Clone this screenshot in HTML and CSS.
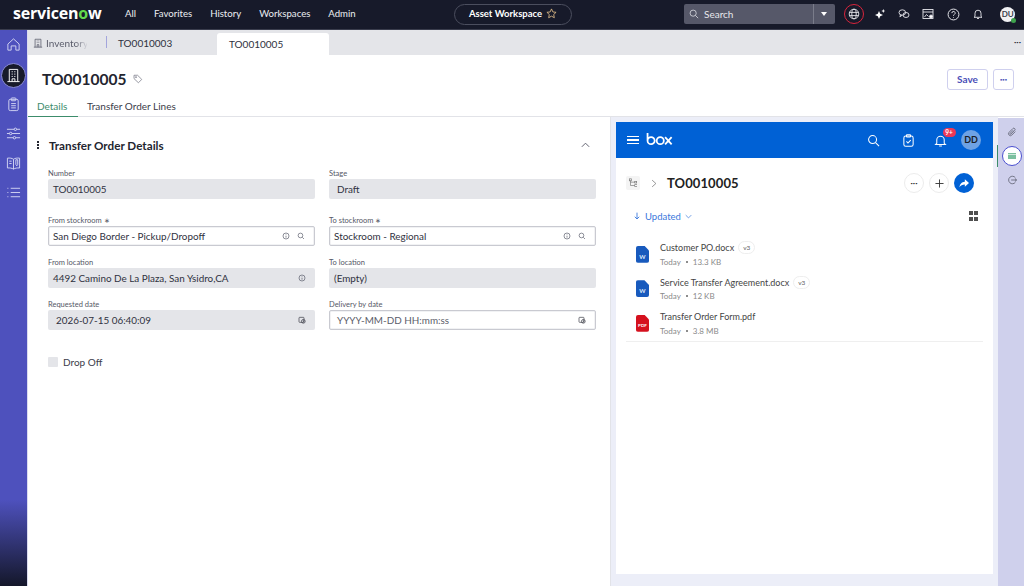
FILE: index.html
```html
<!DOCTYPE html>
<html lang="en">
<head>
    <meta charset="UTF-8">
    <meta name="viewport" content="width=device-width, initial-scale=1.0">
    <title>TO0010005</title>
    <link rel="stylesheet" href="styles.css">
</head>
<body>

    <header class="topbar">
        <div class="logo">servicen<span class="logo-o">o</span>w</div>
        <nav class="topnav">
            <span>All</span>
            <span>Favorites</span>
            <span>History</span>
            <span>Workspaces</span>
            <span>Admin</span>
        </nav>
        <div class="workspace-pill">
            <span>Asset Workspace</span>
            <svg class="star" viewBox="0 0 12 12"><path d="M6 1l1.5 3.3 3.5.4-2.6 2.4.7 3.5L6 8.9 2.9 10.600l.7-3.500L1 4.700l3.500-.4z"/></svg>
        </div>
        <div class="search-box">
            <div class="search-main">
                <svg class="ic ic-search" viewBox="0 0 12 12"><circle cx="5" cy="5" r="3.700"/><path d="M7.800 7.800L11 11"/></svg>
                <span>Search</span>
            </div>
            <div class="search-caret"></div>
        </div>
        <div class="top-icons">
            <div class="globe-ring">
                <svg class="ic" viewBox="0 0 12 12"><circle cx="6" cy="6" r="4.800"/><ellipse cx="6" cy="6" rx="2.200" ry="4.800"/><path d="M1.300 4.400h9.400M1.300 7.600h9.400"/></svg>
            </div>
            <svg class="ic ic-fill" viewBox="0 0 12 12"><path d="M5 3l1.200 2.800L9 7 6.200 8.200 5 11 3.800 8.200 1 7l2.800-1.200zM9.300 1l.6 1.400 1.400.6-1.400.6-.6 1.400-.6-1.400L7.300 3l1.400-.6z"/></svg>
            <svg class="ic" viewBox="0 0 12 12"><ellipse cx="4.300" cy="4.500" rx="3.300" ry="2.700"/><ellipse cx="8" cy="7" rx="3" ry="2.500"/><path d="M2.500 7l-.6 1.800L4 7.300"/></svg>
            <svg class="ic" viewBox="0 0 12 12"><rect x="1" y="1.500" width="10" height="9"/><path d="M1 4h10M2.500 9l2-2.500 2 2"/><circle cx="9" cy="8.500" r="1.500" fill="#fff"/></svg>
            <svg class="ic ic-lg" viewBox="0 0 12 12"><circle cx="6" cy="6" r="5"/><path d="M4.500 4.700a1.500 1.500 0 1 1 2.200 1.300c-.5.300-.7.600-.7 1.100M6 8.500v.6"/></svg>
            <svg class="ic" viewBox="0 0 12 12"><path d="M3 8.500V5.200a3 3 0 0 1 6 0v3.300l1 .8H2zM5 10.500h2"/></svg>
            <div class="user-avatar">DU<span class="status-dot"></span></div>
        </div>
    </header>

    <div class="app-body">
        <aside class="side-rail">
            <svg class="rail-ic" viewBox="0 0 16 16"><path d="M2 7.500L8 2l6 5.500V14h-3.500V9.500h-5V14H2z"/></svg>
            <div class="rail-active">
                <svg class="rail-ic" viewBox="0 0 16 16"><path d="M3.500 14.500v-13h9v13M1.500 14.500h13M6 4h1.200M8.800 4H10M6 6.500h1.200M8.800 6.500H10M6 9h1.200M8.800 9H10M6.500 14.500v-3h3v3"/></svg>
            </div>
            <svg class="rail-ic" viewBox="0 0 16 16"><rect x="3" y="2.500" width="10" height="12" rx="1.500"/><rect x="5.500" y="1" width="5" height="3" rx=".8"/><path d="M5.500 7h5M5.500 9.300h5M5.500 11.600h5"/></svg>
            <svg class="rail-ic" viewBox="0 0 16 16"><path d="M1 3.500h14M1 8h14M1 12.500h14"/><circle cx="10" cy="3.500" r="1.300" fill="#4e51bd"/><circle cx="5" cy="8" r="1.300" fill="#4e51bd"/><circle cx="9" cy="12.500" r="1.300" fill="#4e51bd"/></svg>
            <svg class="rail-ic" viewBox="0 0 16 16"><path d="M8 3.500C6.500 2.300 4 2 1.500 2.300v10.500C4 12.500 6.500 13 8 14c1.500-1 4-1.500 6.500-1.200V2.300C12 2 9.500 2.300 8 3.500zM8 3.500V14M3.500 5.500h2.500M3.500 8h2.500M10.500 4v5l1 1.500 1-1.500V4z"/></svg>
            <svg class="rail-ic" viewBox="0 0 16 16"><path d="M5 3.500h10M5 8h10M5 12.500h10M1.500 3.500h1M1.500 8h1M1.500 12.500h1"/></svg>
        </aside>

        <div class="workspace">
            <div class="tab-strip">
                <div class="tab-home">
                    <svg viewBox="0 0 12 12"><path d="M2.500 11V1.500h7V11M1 11h10M4.500 3.500h1M6.500 3.500h1M4.500 5.500h1M6.500 5.500h1M5 11V8h2v3"/></svg>
                    <span class="tab-fade">Inventory</span>
                </div>
                <div class="tab-item">TO0010003</div>
                <div class="tab-item tab-current">TO0010005</div>
                <div class="dots-dark">•••</div>
            </div>

            <div class="record-head">
                <div class="record-title">
                    <h1>TO0010005</h1>
                    <svg viewBox="0 0 12 12"><path d="M1.200 1.500h4.300l5 5-4 4-5.300-5z"/><circle cx="3.600" cy="3.800" r=".7"/></svg>
                </div>
                <div class="record-actions">
                    <button class="btn-save">Save</button>
                    <button class="btn-more">•••</button>
                </div>
            </div>

            <div class="record-tabs">
                <div class="rtab rtab-on">Details</div>
                <div class="rtab">Transfer Order Lines</div>
            </div>

            <div class="split">
                <section class="form-pane">
                    <div class="form-head">
                        <div class="kebab"><i></i><i></i><i></i></div>
                        <h2>Transfer Order Details</h2>
                        <svg class="collapse" viewBox="0 0 12 8"><path d="M2 6l4-4 4 4"/></svg>
                    </div>
                    <div class="form-grid">
                        <div class="field field-first">
                            <label>Number</label>
                            <div class="input ro">TO0010005</div>
                        </div>
                        <div class="field field-first">
                            <label>Stage</label>
                            <div class="input ro input-pad">Draft</div>
                        </div>
                        <div class="field">
                            <label>From stockroom <em>∗</em></label>
                            <div class="input edit">
                                <span>San Diego Border - Pickup/Dropoff</span>
                                <svg class="fi" viewBox="0 0 12 12"><circle cx="6" cy="6" r="4.500"/><path d="M6 5.500v3M6 3.500v.8"/></svg>
                                <svg class="fi" viewBox="0 0 12 12"><circle cx="5.200" cy="5.200" r="3.500"/><path d="M8 8l2.500 2.500"/></svg>
                            </div>
                        </div>
                        <div class="field">
                            <label>To stockroom <em>∗</em></label>
                            <div class="input edit">
                                <span>Stockroom - Regional</span>
                                <svg class="fi" viewBox="0 0 12 12"><circle cx="6" cy="6" r="4.500"/><path d="M6 5.500v3M6 3.500v.8"/></svg>
                                <svg class="fi" viewBox="0 0 12 12"><circle cx="5.200" cy="5.200" r="3.500"/><path d="M8 8l2.500 2.500"/></svg>
                            </div>
                        </div>
                        <div class="field">
                            <label>From location</label>
                            <div class="input ro">
                                <span>4492 Camino De La Plaza, San Ysidro,CA</span>
                                <svg class="fi" viewBox="0 0 12 12"><circle cx="6" cy="6" r="4.500"/><path d="M6 5.500v3M6 3.500v.8"/></svg>
                            </div>
                        </div>
                        <div class="field">
                            <label>To location</label>
                            <div class="input ro">(Empty)</div>
                        </div>
                        <div class="field">
                            <label>Requested date</label>
                            <div class="input ro input-pad">
                                <span>2026-07-15 06:40:09</span>
                                <svg class="fi fi-dark" viewBox="0 0 12 12"><rect x="1.500" y="2" width="7.500" height="7.500" rx="1"/><circle cx="8" cy="8" r="2.800"/><path d="M8 6.500V8l1 .8"/></svg>
                            </div>
                        </div>
                        <div class="field">
                            <label>Delivery by date</label>
                            <div class="input edit input-pad placeholder">
                                <span>YYYY-MM-DD HH:mm:ss</span>
                                <svg class="fi fi-dark" viewBox="0 0 12 12"><rect x="1.500" y="2" width="7.500" height="7.500" rx="1"/><circle cx="8" cy="8" r="2.800"/><path d="M8 6.500V8l1 .8"/></svg>
                            </div>
                        </div>
                    </div>
                    <div class="check-row">
                        <span class="check"></span>
                        <span>Drop Off</span>
                    </div>
                </section>

                <section class="side-pane">
                    <div class="box-app">
                        <div class="box-head">
                            <div class="burger"><i></i><i></i><i></i></div>
                            <svg class="box-logo" viewBox="0 0 28 15"><path d="M1.200 1v8.500M1.200 9.300a3.800 3.800 0 1 0 7.600 0 3.800 3.800 0 1 0-7.600 0zM11 9.300a3.800 3.800 0 1 0 7.600 0 3.800 3.800 0 1 0-7.600 0zM20 5.500l7 7.800M27 5.500l-7 7.800"/></svg>
                            <div class="box-head-right">
                                <svg class="box-ic box-search" viewBox="0 0 14 14"><circle cx="6" cy="6" r="4.300"/><path d="M9.200 9.200L13 13"/></svg>
                                <svg class="box-ic" viewBox="0 0 14 14"><rect x="2" y="2.200" width="10" height="11" rx="2"/><rect x="4.800" y=".8" width="4.400" height="2.400" rx=".6"/><path d="M4.800 8l1.600 1.700 3-3.200"/></svg>
                                <div class="bell-wrap">
                                    <svg class="box-ic" viewBox="0 0 14 14"><path d="M3 10V6.500a4 4 0 0 1 8 0V10l1.300 1.300H1.700zM5.500 12.800h3"/></svg>
                                    <span class="bell-badge">9+</span>
                                </div>
                                <div class="box-avatar">DD</div>
                            </div>
                        </div>
                        <div class="crumbs">
                            <div class="tree-btn">
                                <svg viewBox="0 0 12 12"><path d="M3 3v6h5M3 5h5"/><rect x="1.800" y="1" width="2.400" height="2.400"/><rect x="8" y="4" width="2.400" height="2"/><rect x="8" y="8" width="2.400" height="2"/></svg>
                            </div>
                            <svg class="crumb-arrow" viewBox="0 0 8 12"><path d="M1.500 1.500L6.500 6l-5 4.500"/></svg>
                            <div class="folder-name">TO0010005</div>
                            <div class="crumb-actions">
                                <div class="round-btn dots-sm">•••</div>
                                <div class="round-btn">
                                    <svg viewBox="0 0 10 10"><path d="M5 .5v9M.5 5h9"/></svg>
                                </div>
                                <div class="round-btn share">
                                    <svg viewBox="0 0 12 10"><path d="M7 0l5 4.500L7 9V6.200C4 6.200 2 7.200.5 9.500 1 5.800 3 3 7 2.800z"/></svg>
                                </div>
                            </div>
                        </div>
                        <div class="sort-row">
                            <svg class="sort-arrow" viewBox="0 0 8 10"><path d="M4 .5v8.500M1 6l3 3 3-3"/></svg>
                            <span>Updated</span>
                            <svg class="sort-caret" viewBox="0 0 10 6"><path d="M1 1l4 4 4-4"/></svg>
                            <div class="grid-toggle"><i></i><i></i><i></i><i></i></div>
                        </div>
                        <div class="file-list">
                            <div class="file-row">
                                <div class="doc-icon"><b>W</b></div>
                                <div>
                                    <div class="file-name">Customer PO.docx <span class="ver">v3</span></div>
                                    <div class="file-meta">Today <i></i> 13.3 KB</div>
                                </div>
                            </div>
                            <div class="file-row">
                                <div class="doc-icon"><b>W</b></div>
                                <div>
                                    <div class="file-name">Service Transfer Agreement.docx <span class="ver">v3</span></div>
                                    <div class="file-meta">Today <i></i> 12 KB</div>
                                </div>
                            </div>
                            <div class="file-row">
                                <div class="doc-icon doc-pdf"><b>PDF</b></div>
                                <div>
                                    <div class="file-name">Transfer Order Form.pdf</div>
                                    <div class="file-meta">Today <i></i> 3.8 MB</div>
                                </div>
                            </div>
                        </div>
                    </div>
                </section>

                <aside class="right-rail">
                    <svg class="rr-ic" viewBox="0 0 12 12"><path d="M10 5.500L5.800 9.700a2.300 2.300 0 0 1-3.300-3.300l4.500-4.500a1.500 1.500 0 0 1 2.200 2.200L4.800 8.500a.7.700 0 0 1-1-1L7.500 3.800"/></svg>
                    <div class="rr-active">
                        <div class="rr-mark"></div>
                    </div>
                    <svg class="rr-ic" viewBox="0 0 12 12"><path d="M10 3.200A4.500 4.500 0 1 0 10 8.800M5 6h6.500M9.500 4.200L11.500 6 9.500 7.800"/></svg>
                </aside>
            </div>
        </div>
    </div>

</body>
</html>
```

FILE: styles.css
```css
* {
    box-sizing: border-box;
}

html, body {
    height: 100%;
}

body {
    margin: 0;
    overflow: hidden;
    display: flex;
    flex-direction: column;
    background-color: #fff;
    color: #23252f;
    font-family: Lato, 'Liberation Sans', sans-serif;
}

svg {
    fill: none;
    stroke: currentColor;
    flex-shrink: 0;
}

/* top bar */
.topbar {
    height: 30px;
    flex-shrink: 0;
    display: flex;
    align-items: center;
    padding-bottom: 1px;
    background-color: #171a2a;
    color: #fff;
    border-bottom: 1px solid #3a3d4d;
}

.logo {
    width: 125px;
    padding: 0 0 3px 13px;
    font-family: 'Open Sans', sans-serif;
    font-size: 16px;
    font-weight: 700;
    letter-spacing: -0.2px;
    line-height: 24px;
}

.logo-o {
    color: #62d84e;
}

.topnav {
    display: flex;
    gap: 18px;
    width: 329px;
    padding-bottom: 1px;
    font-size: 9.6px;
    color: #eceef2;
}

.workspace-pill {
    width: 118px;
    height: 21px;
    display: flex;
    align-items: center;
    justify-content: center;
    gap: 4px;
    padding-bottom: 1px;
    border: 1px solid #4b4e5e;
    border-radius: 11px;
    font-size: 9.5px;
    font-weight: 700;
}

.star {
    width: 11px;
    height: 11px;
    stroke: #e4c08a;
    stroke-width: 0.9;
}

.search-box {
    margin-left: 112px;
    width: 151px;
    height: 20px;
    display: flex;
    background-color: #565869;
    border-radius: 2px;
    font-size: 10px;
    color: #e6e7ec;
}

.search-main {
    flex: 1;
    display: flex;
    align-items: center;
    gap: 5px;
    padding: 0 0 1px 5px;
    border-right: 1px solid #7a7c8a;
}

.search-caret {
    width: 21px;
    position: relative;
}

.search-caret::after {
    content: "";
    position: absolute;
    left: 7px;
    top: 8px;
    border: 3.5px solid transparent;
    border-top: 4px solid #fff;
    border-bottom: 0;
}

.ic {
    width: 12px;
    height: 12px;
    stroke-width: 0.9;
    stroke: #e6e7ec;
}

.ic-search {
    width: 10px;
    height: 10px;
}

.ic-fill {
    fill: #fff;
    stroke: none;
}

.ic-lg {
    width: 13px;
    height: 13px;
}

.top-icons {
    margin-left: 9px;
    display: flex;
    align-items: center;
    gap: 12.3px;
}

.globe-ring {
    width: 20px;
    height: 20px;
    display: flex;
    align-items: center;
    justify-content: center;
    border: 1.300px solid #d9243c;
    border-radius: 50%;
    margin-right: -2.5px;
}

.user-avatar {
    width: 15px;
    height: 15px;
    margin-left: 4px;
    position: relative;
    border-radius: 50%;
    background-color: #f1f1f3;
    color: #3d3f4b;
    font-size: 8px;
    font-weight: 700;
    line-height: 15px;
    text-align: center;
}

.status-dot {
    position: absolute;
    right: -1px;
    bottom: -1px;
    width: 5px;
    height: 5px;
    border-radius: 50%;
    background-color: #3fa34d;
}

/* left rail */
.app-body {
    flex: 1;
    min-height: 0;
    display: flex;
}

.side-rail {
    width: 27px;
    flex-shrink: 0;
    display: flex;
    flex-direction: column;
    align-items: center;
    padding-top: 7px;
    gap: 14.5px;
    background: linear-gradient(to bottom, #4e51bd 0, #4e51bd 470px, #14172a 100%);
    color: #d3d5f3;
    margin-right: 1px;
    box-shadow: 1px 0 0 #dadbf0;
}

.rail-ic {
    width: 15px;
    height: 15px;
    stroke-width: 1;
}

.rail-active {
    width: 25px;
    height: 25px;
    margin: -4px 0 -5.5px;
    display: flex;
    align-items: center;
    justify-content: center;
    border-radius: 50%;
    background-color: #171a2a;
    border: 1px solid #8a8cd8;
    color: #fff;
}

/* main column */
.workspace {
    flex: 1;
    min-width: 0;
    display: flex;
    flex-direction: column;
}

.tab-strip {
    height: 25px;
    flex-shrink: 0;
    display: flex;
    align-items: stretch;
    background-color: #e4e5e9;
    font-size: 10px;
    color: #2f3140;
}

.tab-home {
    width: 79px;
    display: flex;
    align-items: center;
    gap: 3px;
    padding-left: 5px;
    position: relative;
    color: #555766;
}

.tab-home svg {
    width: 10px;
    height: 10px;
    stroke-width: 0.9;
}

.tab-home::after {
    content: "";
    position: absolute;
    right: 0;
    top: 6px;
    width: 1px;
    height: 12px;
    background-color: #a3a5dc;
}

.tab-fade {
    width: 41px;
    overflow: hidden;
    background: linear-gradient(to right, #555766 70%, #d5d6dc 100%);
    -webkit-background-clip: text;
    background-clip: text;
    color: transparent;
}

.tab-item {
    width: 110px;
    padding-left: 11px;
    display: flex;
    align-items: center;
}

.tab-current {
    width: 112px;
    margin-top: 3px;
    padding-left: 12px;
    background-color: #fff;
    border-radius: 3px 3px 0 0;
}

.dots-dark {
    margin-left: auto;
    padding-right: 3px;
    font-size: 4px;
    line-height: 25px;
    letter-spacing: 0;
}

.record-head {
    height: 45px;
    flex-shrink: 0;
    display: flex;
    align-items: center;
    justify-content: space-between;
    padding: 3px 10px 0 14px;
}

.record-title {
    display: flex;
    align-items: center;
    gap: 7px;
}

.record-title h1 {
    margin: 0;
    font-size: 15.5px;
    font-weight: 700;
    color: #23252f;
}

.record-title svg {
    width: 10px;
    height: 10px;
    stroke: #777986;
    stroke-width: 0.9;
}

.record-actions {
    display: flex;
    gap: 5px;
}

.record-actions button {
    height: 21px;
    padding: 0;
    background-color: #fff;
    border: 1px solid #cfd0ee;
    border-radius: 3px;
    color: #4a4fb8;
    font-family: Lato, sans-serif;
    font-weight: 700;
}

.btn-save {
    width: 41px;
    font-size: 10px;
}

.btn-more {
    width: 21px;
    font-size: 4px;
}

.record-tabs {
    height: 17px;
    flex-shrink: 0;
    display: flex;
    font-size: 10px;
    border-bottom: 1px solid #e2e3e8;
    color: #3b3d4a;
}

.rtab {
    padding: 0 9px;
    line-height: 13px;
}

.rtab-on {
    width: 50px;
    color: #3c8c6b;
    border-bottom: 1px solid #3c8c6b;
    height: 17px;
}

.split {
    flex: 1;
    min-height: 0;
    display: flex;
}

/* form */
.form-pane {
    width: 583px;
    flex-shrink: 0;
    padding: 20px 15px 0 8px;
    border-right: 1px solid #e2e3e8;
}

.form-head {
    height: 16px;
    display: flex;
    align-items: center;
}

.kebab {
    width: 13px;
    display: flex;
    flex-direction: column;
    gap: 1px;
}

.kebab i {
    width: 2px;
    height: 2px;
    margin-left: 1px;
    background-color: #23252f;
}

.form-head h2 {
    flex: 1;
    margin: 0;
    font-size: 11.7px;
    font-weight: 700;
    color: #23252f;
}

.collapse {
    width: 11px;
    height: 8px;
    margin-right: 4px;
    stroke: #555766;
    stroke-width: 1;
}

.form-grid {
    margin: 15px 0 0 12px;
    display: grid;
    grid-template-columns: 267px 267px;
    column-gap: 14px;
    row-gap: 11px;
}

.field label {
    display: block;
    height: 11px;
    font-size: 7.500px;
    line-height: 11px;
    color: #555766;
}

.field label em {
    font-style: normal;
    font-size: 7px;
}

.field-first {
    padding-bottom: 5px;
}

.input {
    height: 20px;
    display: flex;
    align-items: center;
    gap: 7px;
    padding: 0 5px;
    border-radius: 2px;
    font-size: 9.9px;
    color: #2f3140;
}

.input span {
    flex: 1;
}

.input-pad {
    padding-left: 8px;
}

.ro {
    background-color: #e4e5e9;
}

.edit {
    padding-left: 4px;
    background-color: #fff;
    border: 1px solid #c9cad1;
    box-shadow: inset 0 0 0 .5px #e4e5e9;
}

.edit.input-pad {
    padding-left: 7px;
}

.placeholder {
    color: #5b5d6a;
}

.fi {
    width: 8px;
    height: 8px;
    stroke: #555766;
    stroke-width: 1;
}

.fi-dark {
    stroke: #33353f;
    stroke-width: 1;
}

.input > .fi:last-child {
    margin-right: 4px;
}

.check-row {
    margin: 26px 0 0 12px;
    display: flex;
    align-items: center;
    gap: 5px;
    font-size: 10px;
    color: #3b3d4a;
}

.check {
    width: 10px;
    height: 10px;
    border-radius: 1px;
    background-color: #e4e5e9;
}

/* box panel */
.side-pane {
    flex: 1;
    min-width: 0;
    padding: 5px 5px 12px 5px;
    background-color: #eceef8;
}

.box-app {
    height: 100%;
    background-color: #fff;
}

.box-head {
    height: 36px;
    display: flex;
    align-items: center;
    padding: 0 12px 0 11px;
    background-color: #0061d5;
    color: #fff;
}

.burger {
    width: 12px;
    display: flex;
    flex-direction: column;
    gap: 2px;
}

.burger i {
    height: 1.500px;
    background-color: #fff;
}

.box-logo {
    width: 27px;
    height: 14px;
    margin: -3px 0 0 7px;
    stroke: #fff;
    stroke-width: 1.900;
}

.box-head-right {
    margin-left: auto;
    display: flex;
    align-items: center;
    gap: 19px;
}

.box-ic {
    display: block;
    width: 13px;
    height: 13px;
    stroke-width: 1.100;
}

.box-search {
    margin-right: 3px;
}

.bell-wrap {
    position: relative;
}

.bell-badge {
    position: absolute;
    left: 9px;
    top: -6px;
    width: 13px;
    height: 9px;
    border-radius: 5px;
    background-color: #ed3757;
    font-size: 6.500px;
    font-weight: 700;
    line-height: 9px;
    text-align: center;
}

.box-avatar {
    width: 20px;
    height: 20px;
    margin-left: -4.5px;
    border-radius: 50%;
    background-color: #6ea2e4;
    color: #1a1c26;
    font-size: 9px;
    font-weight: 700;
    line-height: 20px;
    text-align: center;
}

.crumbs {
    height: 50px;
    display: flex;
    align-items: center;
    padding: 0 19px 0 10px;
}

.tree-btn {
    width: 14px;
    height: 14px;
    margin-right: 11px;
    padding: 2px;
    display: flex;
    border-radius: 2px;
    background-color: #f4f4f4;
    color: #767676;
}

.tree-btn svg {
    width: 10px;
    height: 10px;
    stroke-width: 0.8;
}

.crumb-arrow {
    width: 6px;
    height: 9px;
    margin-right: 10px;
    stroke: #767676;
    stroke-width: 1;
}

.folder-name {
    font-size: 13px;
    font-weight: 700;
    color: #222;
    letter-spacing: 0.1px;
}

.crumb-actions {
    margin-left: auto;
    display: flex;
    gap: 5px;
}

.round-btn {
    width: 20px;
    height: 20px;
    display: flex;
    align-items: center;
    justify-content: center;
    border: 1px solid #ececec;
    border-radius: 50%;
    color: #333;
}

.round-btn svg {
    width: 9px;
    height: 9px;
    stroke-width: 1;
}

.dots-sm {
    font-size: 4px;
}

.round-btn.share {
    border: 0;
    background-color: #0061d5;
}

.share svg {
    width: 10px;
    height: 9px;
    fill: #fff;
    stroke: none;
}

.sort-row {
    height: 16px;
    display: flex;
    align-items: center;
    padding: 0 15px 0 18px;
    font-size: 9.5px;
    color: #3a78dc;
}

.sort-arrow {
    width: 6px;
    height: 8px;
    margin-right: 5px;
    stroke-width: 1.200;
}

.sort-caret {
    width: 7px;
    height: 5px;
    margin-left: 4px;
    stroke-width: 1;
}

.grid-toggle {
    margin-left: auto;
    display: grid;
    grid-template-columns: 4px 4px;
    gap: 1.500px;
}

.grid-toggle i {
    height: 4px;
    background-color: #4e4e4e;
}

.file-list {
    margin: 13px 10px 0 10px;
    border-bottom: 1px solid #efefef;
}

.file-row {
    height: 34.500px;
    display: flex;
    align-items: center;
    gap: 11px;
    padding-left: 10px;
}

.doc-icon {
    width: 13px;
    height: 17px;
    display: flex;
    align-items: flex-end;
    justify-content: center;
    padding-bottom: 3px;
    border-radius: 2px;
    background-color: #185abd;
    clip-path: polygon(0 0, 65% 0, 100% 28%, 100% 100%, 0 100%);
}

.doc-icon b {
    color: #dce8fa;
    font-size: 6px;
    line-height: 7px;
}

.doc-pdf {
    background-color: #d5111e;
}

.doc-pdf b {
    color: #fff;
    font-size: 4.500px;
}

.file-name {
    display: flex;
    align-items: center;
    gap: 4px;
    height: 12px;
    font-size: 9px;
    color: #444;
}

.ver {
    padding: 0 4px;
    border: 1px solid #eee;
    border-radius: 7px;
    font-size: 6.500px;
    line-height: 11px;
    color: #666;
}

.file-meta {
    display: flex;
    align-items: center;
    gap: 5px;
    margin-top: 3px;
    font-size: 8px;
    color: #8a8a8a;
}

.file-meta i {
    width: 2px;
    height: 2px;
    border-radius: 50%;
    background-color: #666;
}

/* right rail */
.right-rail {
    width: 26px;
    flex-shrink: 0;
    display: flex;
    flex-direction: column;
    align-items: center;
    padding: 9px 0 0 2px;
    gap: 9px;
    background-color: #cfd0ec;
    margin-top: 1px;
}

.rr-ic {
    width: 10px;
    height: 10px;
    stroke: #555766;
    stroke-width: 0.9;
}

.rr-active {
    width: 20px;
    height: 20px;
    display: flex;
    align-items: center;
    justify-content: center;
    border: 1.300px solid #4a4fd0;
    border-radius: 50%;
    background-color: #fff;
    position: relative;
}

.rr-active::before {
    content: "";
    position: absolute;
    left: -6px;
    top: -2px;
    width: 1px;
    height: 22px;
    background-color: #3c8c6b;
}

.rr-mark {
    width: 8px;
    height: 6px;
    background: linear-gradient(to bottom, #7cc0a0 0, #7cc0a0 1px, #cfe8dc 1px, #cfe8dc 2px, #7cc0a0 2px);
}
```
